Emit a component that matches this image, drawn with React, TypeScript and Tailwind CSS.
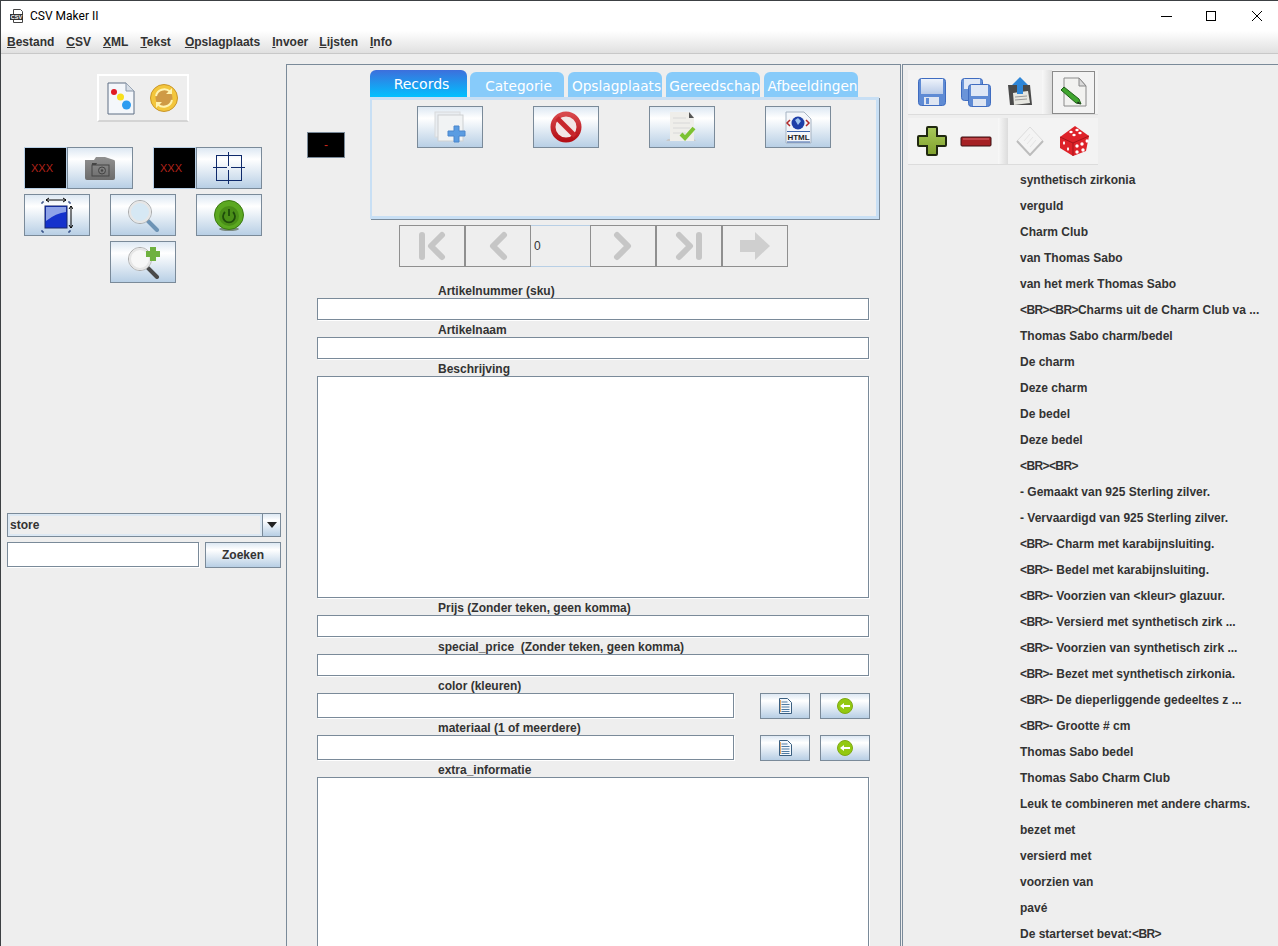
import React from 'react';

const btnBg = 'bg-[linear-gradient(180deg,#dde8f3_0%,#ffffff_28%,#b8cfe5_100%)] border border-[#7a8a99]';

const Btn: React.FC<{ className?: string; children?: React.ReactNode }> = ({ className = 'w-[66px] h-[42px]', children }) => (
  <div className={`${btnBg} ${className} shrink-0 flex items-center justify-center`}>{children}</div>
);

const NavBtn: React.FC<{ children?: React.ReactNode }> = ({ children }) => (
  <div className="w-[66px] h-[42px] border border-[#8f8f8f] flex items-center justify-center">{children}</div>
);

const BlackBox: React.FC = () => (
  <div className="w-[43px] h-[42px] bg-black border border-[#b8cfe5] flex items-center pl-[6px] text-[#b3231a] text-[11px] font-normal">XXX</div>
);

const Field: React.FC<{ className?: string }> = ({ className = 'w-[552px] h-[22px]' }) => (
  <div className={`${className} bg-white border border-[#7a8a99] shadow-[1px_1px_0_#ffffff]`} />
);

const Label: React.FC<{ children: React.ReactNode }> = ({ children }) => (
  <div className="h-[17px] leading-[21px] pl-[121px] whitespace-pre">{children}</div>
);

/* icons */
const PaletteDoc = () => (
  <svg width="28" height="33" viewBox="0 0 28 33">
    <path d="M1 1h18l8 8v23H1z" fill="#f4f7fb" stroke="#5f6f84" />
    <path d="M19 1v8h8" fill="#d8dfe8" stroke="#8896a8" />
    <circle cx="7" cy="10" r="3" fill="#e01b24" />
    <circle cx="13.500" cy="15" r="3.500" fill="#f7e01e" />
    <circle cx="19.500" cy="23" r="4.500" fill="#2d9cf0" />
  </svg>
);
const SyncGold = () => (
  <svg width="28" height="28" viewBox="0 0 28 28">
    <circle cx="14" cy="14" r="13.500" fill="#f3c63c" stroke="#c9962a" />
    <circle cx="14" cy="14" r="8.500" fill="#cf9a45" />
    <path d="M6 12a8.500 8.500 0 0 1 14-4.500M22 16a8.500 8.500 0 0 1-14 4.500" fill="none" stroke="#fff3b0" strokeWidth="2" />
    <path d="M22 4v6h-6zM6 24v-6h6z" fill="#fff3b0" />
  </svg>
);
const FolderCam = () => (
  <svg width="32" height="26" viewBox="0 0 32 26">
    <defs>
      <linearGradient id="fc" x1="0" y1="0" x2="0" y2="1">
        <stop offset="0" stopColor="#909090" />
        <stop offset="1" stopColor="#6c6c6c" />
      </linearGradient>
    </defs>
    <path d="M1 5h9l2-3h9l9 3q1 0 1 2v16q0 2-2 2H3q-2 0-2-2z" fill="url(#fc)" />
    <rect x="8" y="10" width="17" height="11" fill="none" stroke="#444" />
    <path d="M8 10h4l1-2h-5z" fill="#444" />
    <circle cx="18" cy="15.500" r="3.500" fill="none" stroke="#444" />
    <circle cx="18" cy="15.500" r="1.200" fill="#444" />
  </svg>
);
const Crosshair = () => (
  <svg width="32" height="32" viewBox="0 0 32 32" fill="none">
    <rect x="3.500" y="3.500" width="25" height="25" stroke="#0f2a6b" />
    <path d="M15.500 0v14M15.500 18v14M0 15.500h14M18 15.500h14" stroke="#0f2a6b" />
  </svg>
);
const ResizeSquare = () => (
  <svg width="32" height="36" viewBox="0 0 32 36">
    <path d="M1 7V5h2M27 5h2v2M1 33v2h2M27 35h2v-2" fill="none" stroke="#0f2a6b" />
    <rect x="4" y="9" width="22" height="22" fill="#1432cc" stroke="#17276b" />
    <path d="M5 10h20v5q-10 1-20 9z" fill="#8ea3e8" />
    <path d="M5 3h20M5 3l3-2M5 3l3 2M25 3l-3-2M25 3l-3 2M30 9v22M30 9l-2 3M30 9l2 3M30 31l-2-3M30 31l2-3" fill="none" stroke="#000" />
  </svg>
);
const Magnifier: React.FC<{ plus?: boolean }> = ({ plus }) => (
  <svg width="33" height="33" viewBox="0 0 33 33">
    <path d="M21 22l9 9" stroke={plus ? '#4a4a4a' : '#6d93b5'} strokeWidth="4" strokeLinecap="round" />
    <circle cx="13" cy="13" r="11.500" fill={plus ? '#f7f7f7' : '#d6e8f4'} stroke="#a8a8a8" strokeWidth="1" />
    <circle cx="13" cy="13" r="10" fill="none" stroke="#e6e6e6" strokeWidth="2" />
    {plus && <path d="M23 1h6v4h4v6h-4v4h-6v-4h-4V5h4z" fill="#6fb13f" />}
  </svg>
);
const Power = () => (
  <svg width="30" height="31" viewBox="0 0 30 31">
    <ellipse cx="15" cy="29" rx="10" ry="2" fill="#7a8a80" />
    <circle cx="15" cy="15" r="14.500" fill="#5ba821" stroke="#3b7a12" />
    <circle cx="15" cy="16" r="10" fill="#4a8f18" />
    <path d="M11 12a6 6 0 1 0 8 0" fill="none" stroke="#1f4d0b" strokeWidth="1.800" />
    <path d="M15 9v7" stroke="#1f4d0b" strokeWidth="1.800" />
  </svg>
);
const NewDocs = () => (
  <svg width="32" height="32" viewBox="0 0 32 32">
    <rect x="1" y="1" width="25" height="25" fill="#e9edf1" stroke="#d8dadc" />
    <rect x="4" y="4" width="25" height="26" fill="#f1f3f4" stroke="#cdd0d2" />
    <path d="M20 15h5v5h6v5h-6v6h-5v-6h-6v-5h6z" fill="#5a9ce2" stroke="#4a86cc" />
  </svg>
);
const StopSign = () => (
  <svg width="32" height="32" viewBox="0 0 32 32">
    <defs>
      <linearGradient id="st" x1="0" y1="0" x2="0" y2="1">
        <stop offset="0" stopColor="#d8484c" />
        <stop offset="1" stopColor="#b40f16" />
      </linearGradient>
    </defs>
    <circle cx="16" cy="16" r="13" fill="#f2e6e6" stroke="url(#st)" strokeWidth="5" />
    <path d="M7 7l18 18" stroke="#c8262c" strokeWidth="5" />
  </svg>
);
const DocCheck = () => (
  <svg width="32" height="32" viewBox="0 0 32 32">
    <path d="M0 30h30l-2-2H2z" fill="#c8c8c8" />
    <path d="M4 1h19l5 5v24H4z" fill="#efeeea" />
    <path d="M23 1v6h5z" fill="#555" />
    <path d="M7 7h13M7 12h17M7 17h17M7 22h13" stroke="#d8d8d8" />
    <path d="M15 23l4 4 9-10" fill="none" stroke="#7cc232" strokeWidth="4" />
  </svg>
);
const HtmlDoc = () => (
  <svg width="27" height="33" viewBox="0 0 27 33">
    <path d="M1 1h18l7 7v24H1z" fill="#f3f6fa" stroke="#a6b3c2" />
    <circle cx="13" cy="12" r="6.500" fill="#1f3fa8" />
    <path d="M10 9l3-2 3 3-3 4z" fill="#9ec3ef" />
    <path d="M5 9l-3 3 3 3M21 9l3 3-3 3" fill="none" stroke="#b12a2a" strokeWidth="1.500" />
    <path d="M2 20.500h23M2 31h23" stroke="#3a62a8" />
    <text x="13.500" y="29" textAnchor="middle" fontSize="8" fontWeight="700" fill="#222" fontFamily="Liberation Sans, sans-serif">HTML</text>
  </svg>
);
const navC = '#c6c6c6';
const NavFirst = () => (
  <svg width="28" height="30" viewBox="0 0 28 30" fill="none" stroke={navC} strokeLinecap="round" strokeLinejoin="round" strokeWidth="6">
    <path d="M4 4v22" />
    <path d="M24 4L13 15l11 11" />
  </svg>
);
const NavPrev = () => (
  <svg width="20" height="30" viewBox="0 0 20 30" fill="none" stroke={navC} strokeLinecap="round" strokeLinejoin="round" strokeWidth="6">
    <path d="M16 4L5 15l11 11" />
  </svg>
);
const NavNext = () => (
  <svg width="20" height="30" viewBox="0 0 20 30" fill="none" stroke={navC} strokeLinecap="round" strokeLinejoin="round" strokeWidth="6">
    <path d="M4 4l11 11L4 26" />
  </svg>
);
const NavLast = () => (
  <svg width="28" height="30" viewBox="0 0 28 30" fill="none" stroke={navC} strokeLinecap="round" strokeLinejoin="round" strokeWidth="6">
    <path d="M24 4v22" />
    <path d="M4 4l11 11L4 26" />
  </svg>
);
const NavGo = () => (
  <svg width="30" height="28" viewBox="0 0 30 28">
    <path d="M0 8h15V0l15 14-15 14v-8H0z" fill="#cfcfcf" />
  </svg>
);
const Disk = () => (
  <svg width="28" height="28" viewBox="0 0 28 28">
    <defs>
      <linearGradient id="dk" x1="0" y1="0" x2="0" y2="1">
        <stop offset="0" stopColor="#eef3fb" />
        <stop offset="1" stopColor="#b9cbe8" />
      </linearGradient>
    </defs>
    <rect x="0.500" y="0.500" width="27" height="27" rx="3" fill="#5f8bd4" stroke="#3f6cc0" />
    <rect x="3" y="1" width="22" height="15" fill="url(#dk)" />
    <rect x="6" y="19" width="15" height="8" fill="#dfe6f2" />
    <rect x="8" y="20" width="3" height="6" fill="#5f8bd4" />
  </svg>
);
const DiskAll = () => (
  <svg width="30" height="29" viewBox="0 0 30 29">
    <rect x="0.500" y="0.500" width="21" height="22" rx="3" fill="#6a94d8" stroke="#3f6cc0" />
    <rect x="3" y="1" width="16" height="10" fill="#dfe8f6" />
    <g transform="translate(7 6)">
      <rect x="0.500" y="0.500" width="22" height="22" rx="3" fill="#5f8bd4" stroke="#3f6cc0" />
      <rect x="3" y="1" width="17" height="11" fill="#dfe8f6" />
      <rect x="5" y="15" width="13" height="7" fill="#dfe6f2" />
    </g>
  </svg>
);
const DiskUp = () => (
  <svg width="26" height="30" viewBox="0 0 26 30">
    <path d="M2 8h22l2 20H4z" fill="#4a4a4a" />
    <path d="M7 16l15-2 2 12-16 2z" fill="#e6e6e0" />
    <path d="M9 20l12-1M9 23l12-1" stroke="#999" />
    <path d="M14 0l8 8h-5v9h-6V8H6z" fill="#2e86d8" />
  </svg>
);
const PencilDoc = () => (
  <svg width="26" height="30" viewBox="0 0 26 30">
    <path d="M3 1h15l7 8v20H3z" fill="#f2f2f0" stroke="#8a8a8a" />
    <path d="M18 1v8h7z" fill="#dadada" stroke="#8a8a8a" />
    <path d="M0 13l3-3 15 12 2 5-5-1z" fill="#3fa52e" stroke="#1f5e18" />
    <path d="M17 24.500l3 2.500-4-.8z" fill="#222" />
  </svg>
);
const PlusGreen = () => (
  <svg width="30" height="30" viewBox="0 0 30 30">
    <defs>
      <linearGradient id="pg" x1="0" y1="0" x2="0" y2="1">
        <stop offset="0" stopColor="#a8c95a" />
        <stop offset="1" stopColor="#7fa02c" />
      </linearGradient>
    </defs>
    <path d="M11 1h8q1 0 1 1v8h8q1 0 1 1v8q0 1-1 1h-8v8q0 1-1 1h-8q-1 0-1-1v-8H2q-1 0-1-1v-8q0-1 1-1h8V2q0-1 1-1z" fill="url(#pg)" stroke="#20280f" strokeWidth="2" />
  </svg>
);
const MinusRed = () => (
  <svg width="32" height="11" viewBox="0 0 32 11">
    <rect x="1" y="1" width="30" height="9" rx="1" fill="#a52024" stroke="#3a1012" />
    <path d="M3 3h26" stroke="#d8686a" />
  </svg>
);
const Eraser = () => (
  <svg width="28" height="30" viewBox="0 0 28 30">
    <path d="M14 1l13 14-13 14L1 15z" fill="#f4f4f4" stroke="#dcdcdc" />
    <path d="M27 15L14 29 1 15" fill="none" stroke="#bcbcbc" strokeWidth="2" />
    <path d="M8 15l6-7M11 18l6-7M14 21l6-7" stroke="#e6e6e6" />
  </svg>
);
const Dice = () => (
  <svg width="32" height="32" viewBox="0 0 32 32">
    <path d="M2 12L17 1l14 10-3 15-13 5L2 23z" fill="#de2229" />
    <path d="M2 12l13 6 16-7M15 18v13" fill="none" stroke="#a8141a" />
    <g fill="#fff">
      <ellipse cx="13" cy="7" rx="1.700" ry="1.200" />
      <ellipse cx="19" cy="5" rx="1.700" ry="1.200" />
      <ellipse cx="16" cy="10" rx="1.700" ry="1.200" />
      <ellipse cx="22" cy="8" rx="1.700" ry="1.200" />
      <ellipse cx="19" cy="21" rx="1.700" ry="1.700" />
      <ellipse cx="24" cy="19" rx="1.700" ry="1.700" />
      <ellipse cx="29" cy="16" rx="1.500" ry="1.700" />
      <ellipse cx="19" cy="27" rx="1.700" ry="1.700" />
      <ellipse cx="25" cy="25" rx="1.700" ry="1.700" />
      <ellipse cx="6" cy="18" rx="1" ry="1.700" />
      <ellipse cx="10" cy="24" rx="1" ry="1.700" />
    </g>
  </svg>
);
const SmallDoc = () => (
  <svg width="13" height="16" viewBox="0 0 13 16">
    <path d="M0.500 0.500h8l4 4v11h-12z" fill="#f4f8fc" stroke="#3a5f80" />
    <path d="M2.500 4h6M2.500 6.500h8M2.500 9h8M2.500 11.500h8M2.500 13.500h8" stroke="#4f7ba3" />
    <path d="M1.500 2v12" stroke="#e3a86a" />
  </svg>
);
const BackGreen = () => (
  <svg width="16" height="16" viewBox="0 0 16 16">
    <circle cx="8" cy="8" r="7.500" fill="#93c911" stroke="#7ea814" />
    <path d="M3 8l4-3v2h6v2H7v2z" fill="#fff" />
  </svg>
);
const CsvIcon = () => (
  <svg width="16" height="16" viewBox="0 0 16 16">
    <path d="M4.500 1.500h7l2 2v11h-9z" fill="#fff" stroke="#444" />
    <rect x="1" y="6" width="13" height="6" fill="#333" />
    <text x="7.500" y="11" textAnchor="middle" fontSize="5.500" fontWeight="700" fill="#fff" fontFamily="Liberation Sans, sans-serif">CSV</text>
  </svg>
);

const Separator = () => <div className="w-[10px] self-stretch bg-[linear-gradient(90deg,#f8f8f8,#dcdcdc)]" />;

const menus: [string, string, string][] = [
  ['B', 'estand', ''],
  ['C', 'SV', 'ml-[12px]'],
  ['X', 'ML', 'ml-[12px]'],
  ['T', 'ekst', 'ml-[12px]'],
  ['O', 'pslagplaats', 'ml-[14px]'],
  ['I', 'nvoer', 'ml-[12px]'],
  ['L', 'ijsten', 'ml-[11px]'],
  ['I', 'nfo', 'ml-[12px]'],
];

const items = [
  'synthetisch zirkonia', 'verguld', 'Charm Club', 'van Thomas Sabo', 'van het merk Thomas Sabo',
  '<BR><BR>Charms uit de Charm Club va ...', 'Thomas Sabo charm/bedel', 'De charm', 'Deze charm', 'De bedel', 'Deze bedel',
  '<BR><BR>', '- Gemaakt van 925 Sterling zilver.', '- Vervaardigd van 925 Sterling zilver.',
  '<BR>- Charm met karabijnsluiting.', '<BR>- Bedel met karabijnsluiting.', '<BR>- Voorzien van <kleur> glazuur.',
  '<BR>- Versierd met synthetisch zirk ...', '<BR>- Voorzien van synthetisch zirk ...', '<BR>- Bezet met synthetisch zirkonia.',
  '<BR>- De dieperliggende gedeeltes z ...', '<BR>- Grootte # cm', 'Thomas Sabo bedel', 'Thomas Sabo Charm Club',
  'Leuk te combineren met andere charms.', 'bezet met', 'versierd met', 'voorzien van', 'pavé', 'De starterset bevat:<BR>',
];

const tabs = ['Categorie', 'Opslagplaats', 'Gereedschap', 'Afbeeldingen'];

// the <BR> tags come out a little narrower in the original
const ListText: React.FC<{ text: string }> = ({ text }) => (
  <>
    {text.split(/(<BR>)/).map((part, i) =>
      part === '<BR>' ? <span key={i} className="tracking-[-0.6px]">{part}</span> : <span key={i}>{part}</span>
    )}
  </>
);

export default function App() {
  return (
    <div className="w-[1278px] h-[946px] overflow-hidden bg-[#eeeeee] text-[#333333] text-[12px] font-bold font-['Liberation_Sans',sans-serif] border-l border-[#3c4043] flex flex-col">
      {/* title bar */}
      <div className="h-[31px] shrink-0 bg-white border-t border-[#3c4043] flex items-center pl-[8px]">
        <CsvIcon />
        <span className="ml-[5px] text-[12px] font-normal text-black font-['Roboto',sans-serif]">CSV Maker II</span>
        <div className="ml-auto flex items-center">
          <svg width="12" height="12" viewBox="0 0 12 12" className="mr-[32px]"><path d="M0 6.500h11" stroke="#000" /></svg>
          <svg width="12" height="12" viewBox="0 0 12 12" className="mr-[34px]"><rect x="1.500" y="1.500" width="9" height="9" fill="none" stroke="#000" /></svg>
          <svg width="12" height="12" viewBox="0 0 12 12" className="mr-[15px]"><path d="M1 1l10 10M11 1L1 11" stroke="#000" /></svg>
        </div>
      </div>

      {/* menu bar */}
      <div className="h-[23px] shrink-0 bg-[linear-gradient(180deg,#ffffff,#e0e0e0)] border-b border-[#c8c8c8] flex items-center pl-[6px]">
        {menus.map(([m, rest, cls], i) => (
          <span key={i} className={cls}><u>{m}</u>{rest}</span>
        ))}
      </div>

      <div className="flex flex-1 min-h-0">
        {/* left column */}
        <div className="w-[285px] shrink-0 flex flex-col">
          <div className="ml-[96px] mt-[20px] w-[92px] h-[48px] border-2 border-white border-b-[#d4d4d4] flex items-center pl-[8px]">
            <PaletteDoc />
            <div className="ml-[15px]"><SyncGold /></div>
          </div>
          <div className="ml-[23px] mt-[25px] flex">
            <BlackBox />
            <Btn><FolderCam /></Btn>
            <div className="ml-[20px]"><BlackBox /></div>
            <Btn><Crosshair /></Btn>
          </div>
          <div className="ml-[23px] mt-[5px] flex gap-[20px]">
            <Btn><ResizeSquare /></Btn>
            <Btn><Magnifier /></Btn>
            <Btn><Power /></Btn>
          </div>
          <div className="ml-[109px] mt-[5px]">
            <Btn><Magnifier plus /></Btn>
          </div>
          <div className="ml-[6px] mt-[230px] w-[274px] h-[24px] flex border border-[#7a8a99]">
            <div className="flex-1 border-2 border-[#dce8f3] flex items-center">store</div>
            <div className={`w-[19px] -my-px -mr-px flex items-center justify-center ${btnBg}`}>
              <svg width="10" height="6" viewBox="0 0 10 6"><path d="M0 0h10L5 6z" fill="#222" /></svg>
            </div>
          </div>
          <div className="ml-[6px] mt-[5px] flex gap-[6px]">
            <Field className="w-[192px] h-[25px]" />
            <Btn className="w-[76px] h-[26px]">Zoeken</Btn>
          </div>
        </div>

        {/* center column */}
        <div className="mt-[10px] w-[615px] shrink-0 border-l border-t border-r border-[#7a8a99]">
          <div className="flex pl-[20px] pt-[5px]">
            <div className="mt-[62px] w-[38px] h-[26px] bg-black border border-[#7a8a99] flex items-center justify-center text-[#c8281c] font-normal shrink-0">-</div>
            <div className="ml-[25px] w-[510px] font-['DejaVu_Sans',sans-serif] font-normal">
              <div className="flex items-end h-[27px] text-white">
                <div className="w-[97px] h-[27px] rounded-t-[6px] bg-[linear-gradient(180deg,#3d6fdc,#00c0ff)] text-[14px] flex items-center justify-center pt-[2px] pl-[6px]">Records</div>
                {tabs.map((t, i) => (
                  <div key={t} className={`${i === 0 ? 'ml-[3px]' : 'ml-[4px]'} w-[94px] h-[25px] rounded-t-[6px] bg-[#87cbfa] text-[13.7px] flex items-center justify-center pt-[3px] pl-[3px] whitespace-nowrap overflow-hidden`}>{t}</div>
                ))}
              </div>
              <div className="h-[122px] mr-px border-t-[3px] border-l-[2px] border-r-[3px] border-b-[3px] border-[#c8dff4] shadow-[1px_1px_0_#7a8a99] pl-[45px] pt-[6px]">
                <div className="flex gap-[50px]">
                  <Btn><NewDocs /></Btn>
                  <Btn><StopSign /></Btn>
                  <Btn><DocCheck /></Btn>
                  <Btn><HtmlDoc /></Btn>
                </div>
              </div>
              <div className="mt-[6px] ml-[29px] flex font-['Liberation_Sans',sans-serif] text-[12px]">
                <NavBtn><NavFirst /></NavBtn>
                <NavBtn><NavPrev /></NavBtn>
                <div className="w-[59px] h-[42px] border-y border-[#b8cfe5] flex items-center pl-[3px] text-[#333]">0</div>
                <NavBtn><NavNext /></NavBtn>
                <NavBtn><NavLast /></NavBtn>
                <NavBtn><NavGo /></NavBtn>
              </div>
            </div>
          </div>

          <div className="mt-[14px] pl-[30px]">
            <Label>Artikelnummer (sku)</Label>
            <Field />
            <Label>Artikelnaam</Label>
            <Field />
            <Label>Beschrijving</Label>
            <Field className="w-[552px] h-[222px]" />
            <Label>Prijs (Zonder teken, geen komma)</Label>
            <Field />
            <Label>special_price  (Zonder teken, geen komma)</Label>
            <Field />
            <Label>color (kleuren)</Label>
            <div className="flex">
              <Field className="w-[417px] h-[25px]" />
              <Btn className="ml-[26px] w-[50px] h-[26px]"><SmallDoc /></Btn>
              <Btn className="ml-[10px] w-[50px] h-[26px]"><BackGreen /></Btn>
            </div>
            <div className="-mt-px"><Label>materiaal (1 of meerdere)</Label></div>
            <div className="flex">
              <Field className="w-[417px] h-[25px]" />
              <Btn className="ml-[26px] w-[50px] h-[26px]"><SmallDoc /></Btn>
              <Btn className="ml-[10px] w-[50px] h-[26px]"><BackGreen /></Btn>
            </div>
            <div className="-mt-px"><Label>extra_informatie</Label></div>
            <Field className="w-[552px] h-[222px]" />
          </div>
        </div>

        {/* right column */}
        <div className="mt-[10px] ml-px flex-1 border-l border-t border-[#7a8a99] min-w-0">
          <div className="ml-[5px] mt-[5px] w-[190px] h-[45px] border-b border-[#dcdcdc] bg-[#f3f3f3] flex items-center">
            <div className="w-[134px] flex items-center pl-[10px]">
              <Disk />
              <div className="ml-[15px]"><DiskAll /></div>
              <div className="ml-[15px]"><DiskUp /></div>
            </div>
            <Separator />
            <div className="w-[43px] h-[43px] border border-[#8a8a8a] flex items-center justify-center">
              <PencilDoc />
            </div>
          </div>
          <div className="ml-[5px] mt-[3px] w-[190px] h-[47px] border-b border-[#dcdcdc] bg-[#f3f3f3] flex items-center">
            <div className="w-[90px] flex items-center pl-[9px]">
              <PlusGreen />
              <div className="ml-[13px]"><MinusRed /></div>
            </div>
            <Separator />
            <div className="ml-[8px]"><Eraser /></div>
            <div className="ml-[14px]"><Dice /></div>
          </div>
          <div className="mt-[2px] pl-[117px]">
            {items.map(t => (
              <div key={t} className="h-[26px] leading-[26px] whitespace-nowrap"><ListText text={t} /></div>
            ))}
          </div>
        </div>
      </div>
    </div>
  );
}
